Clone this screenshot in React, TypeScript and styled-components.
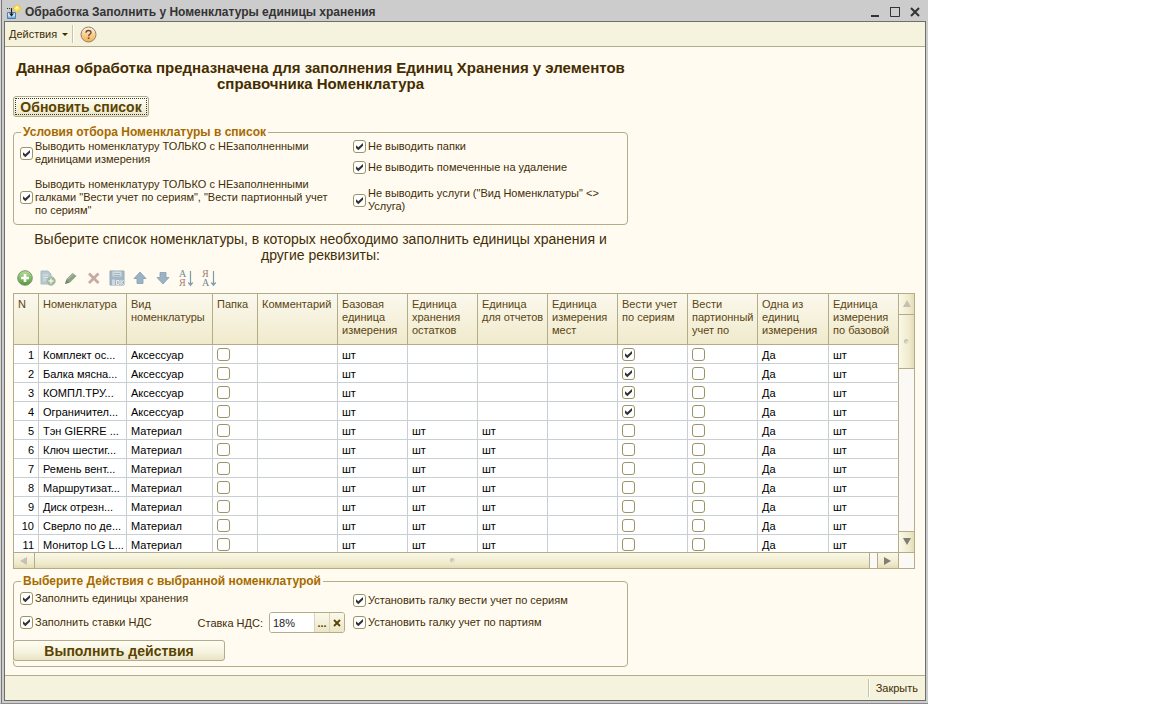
import React, { useState } from "react";
import styled, { createGlobalStyle, css } from "styled-components";

const color = {
  chrome: "#cccccc",
  frame: "#6e6e6e",
  bar: "#f5f2dd",
  page: "#fffbf0",
  line: "#b3ac86",
  grid: "#c8cfd3",
  text: "#3f2e08",
  strong: "#442d00",
  legend: "#a66a00",
  button: "#594300",
  head: "#5a4510",
};

const GlobalStyle = createGlobalStyle`
  *, *::before, *::after { box-sizing: border-box; }
  body { margin: 0; background: #ffffff; }
  body, button, input { font-family: "Liberation Sans", Arial, sans-serif; font-size: 11px; }
`;

const Window = styled.div`
  display: flex;
  flex-direction: column;
  width: 100%;
  max-width: 928px;
  min-height: 100vh;
  padding: 0 2px 2px 3px;
  background: ${color.chrome};
  border-left: 1px solid #d8d8d8;
  border-bottom: 1px solid #8a8a8a;
  box-shadow: inset 1px 0 0 #777777;
  color: ${color.text};
`;

const TitleBar = styled.header`
  display: flex;
  align-items: center;
  height: 21px;
  padding: 2px 1px 0 2px;
`;

const Title = styled.h1`
  flex: 1;
  margin: 0 0 0 3px;
  font-size: 12px;
  line-height: 14px;
  color: #333333;
`;

const PlainButton = styled.button`
  display: inline-flex;
  align-items: center;
  justify-content: center;
  padding: 0;
  border: 0;
  background: none;
  color: inherit;
`;

const WindowButton = styled(PlainButton)`
  width: 20px;
  height: 16px;
`;

const Client = styled.div`
  display: flex;
  flex: 1;
  flex-direction: column;
  border: 1px solid ${color.frame};
  background: ${color.page};
`;

const MenuBar = styled.nav`
  display: flex;
  align-items: center;
  height: 25px;
  padding-left: 4px;
  background: ${color.bar};
  border-bottom: 1px solid ${color.line};
`;

const MenuButton = styled(PlainButton)`
  gap: 5px;
  line-height: 14px;
`;

const Separator = styled.span`
  width: 2px;
  height: 18px;
  margin: 0 6px 0 4px;
  border-left: 1px solid #c9c4a4;
  border-right: 1px solid #ffffff;
`;

const Main = styled.main`
  flex: 1;
  padding: 13px 10px 8px 8px;
`;

const Form = styled.section`
  max-width: 615px;
`;

const Heading = styled.h2`
  margin: 0 0 4px;
  font-size: 15px;
  line-height: 16px;
  text-align: center;
  color: ${color.strong};
`;

const Hint = styled.p`
  margin: 6px 0 4px;
  font-size: 14px;
  line-height: 16px;
  text-align: center;
`;

const PushButton = styled.button<{ $wide?: boolean; $focused?: boolean }>`
  display: block;
  height: 21px;
  width: ${(p) => (p.$wide ? "212px" : "136px")};
  padding: 0;
  font-size: 14px;
  line-height: 16px;
  font-weight: bold;
  white-space: nowrap;
  color: ${color.button};
  border: 1px solid ${color.line};
  border-radius: 3px;
  background: linear-gradient(#fffef6, #f5f2dc 60%, #e9e4c4);
  ${(p) =>
    p.$wide &&
    css`
      box-shadow: 0 -1px 0 ${color.page}, 0 1px 0 ${color.page};
    `}
  ${(p) =>
    p.$focused &&
    css`
      outline: 1px dotted #333333;
      outline-offset: -3px;
    `}
`;

const Group = styled.fieldset`
  min-width: 0;
  margin: 0;
  padding: 0 6px 5px;
  border: 1px solid ${color.line};
  border-radius: 4px;
`;

const FilterGroup = styled(Group)`
  margin-top: 8px;
  padding-bottom: 7px;
`;

const Legend = styled.legend`
  padding: 0 2px;
  margin-left: 1px;
  font-size: 12px;
  line-height: 14px;
  font-weight: bold;
  color: ${color.legend};
`;

const Columns = styled.div`
  display: grid;
  grid-template-columns: 333px 1fr;
`;

const Stack = styled.div<{ $gap: number; $top: number; $rows?: string }>`
  display: grid;
  align-content: start;
  align-items: end;
  gap: ${(p) => p.$gap}px;
  grid-template-rows: ${(p) => p.$rows ?? "none"};
  padding-top: ${(p) => p.$top}px;
`;

const CheckLabel = styled.label`
  display: flex;
  align-items: center;
  gap: 2px;
  line-height: 13px;
`;

const tick =
  "url(\"data:image/svg+xml,%3Csvg xmlns='http://www.w3.org/2000/svg' viewBox='0 0 11 11'%3E%3Cpath d='M2 4.2L4.3 6.3L9 2V4.8L4.3 9.2L2 7Z' fill='%23333333'/%3E%3C/svg%3E\")";

const Check = styled.input.attrs({ type: "checkbox" })`
  appearance: none;
  flex: none;
  display: block;
  width: 13px;
  height: 13px;
  margin: 0;
  border: 1px solid #9b9468;
  border-radius: 3px;
  background: #ffffff;
  &:checked {
    background: #ffffff ${tick} center / 11px 11px no-repeat;
  }
`;

const Between = styled.div`
  display: flex;
  align-items: center;
  justify-content: space-between;
  padding-right: 8px;
`;

const Field = styled.div`
  display: flex;
  align-items: center;
  gap: 6px;
`;

const Combo = styled.div`
  display: flex;
  width: 76px;
  height: 21px;
  border: 1px solid ${color.line};
  border-radius: 3px;
  overflow: hidden;
`;

const ComboInput = styled.input`
  flex: 1;
  min-width: 0;
  padding: 0 3px;
  border: 0;
  background: #ffffff;
  color: #222222;
`;

const ComboButton = styled(PlainButton)`
  width: 15px;
  font-weight: bold;
  color: ${color.button};
  border-left: 1px solid #d9d4b6;
  background: linear-gradient(#fbf9ec, #ebe6c8);
`;

const ActionSlot = styled.div`
  margin: 7px 0 0 -7px;
`;

const ListTools = styled.div`
  display: flex;
  height: 22px;
  margin-bottom: 4px;
`;

const ToolButton = styled(PlainButton)`
  width: 23px;
  height: 22px;
`;

const ListBox = styled.div`
  display: grid;
  grid-template-columns: 1fr 15px;
  grid-template-rows: 258px 16px;
  margin-bottom: 5px;
  border: 1px solid ${color.line};
`;

const Viewport = styled.div`
  overflow: hidden;
  background: #ffffff;
`;

const Table = styled.table`
  width: 100%;
  table-layout: fixed;
  border-collapse: separate;
  border-spacing: 0;
`;

const HeadRow = styled.tr`
  height: 51px;
  background: linear-gradient(#fbf9ee, #f0e9cb);
`;

const HeadCell = styled.th`
  padding: 4px 0 0 4px;
  font-weight: normal;
  line-height: 13px;
  text-align: left;
  vertical-align: top;
  white-space: nowrap;
  color: ${color.head};
  border-right: 1px solid ${color.line};
  border-bottom: 1px solid ${color.line};
`;

const Cell = styled.td<{ $right?: boolean }>`
  height: 19px;
  padding: ${(p) => (p.$right ? "1px 4px 0 0" : "1px 0 0 4px")};
  line-height: 14px;
  text-align: ${(p) => (p.$right ? "right" : "left")};
  white-space: nowrap;
  overflow: hidden;
  color: #000000;
  border-right: 1px solid ${color.grid};
  border-bottom: 1px solid ${color.grid};
  &:last-child {
    border-right-color: ${color.line};
  }
`;

const ScrollTrack = styled.div<{ $vertical?: boolean }>`
  display: flex;
  flex-direction: ${(p) => (p.$vertical ? "column" : "row")};
  justify-content: space-between;
  background: #faf9f5;
  ${(p) => !p.$vertical && css`border-top: 1px solid ${color.line};`}
`;

const face = (vertical?: boolean) =>
  `linear-gradient(${vertical ? "to right" : "to bottom"}, #faf8ea, #efeaca 70%, #e3dcb8)`;

const ScrollArrow = styled(PlainButton)<{ $vertical?: boolean; $end?: boolean }>`
  flex: none;
  width: ${(p) => (p.$vertical ? "15px" : p.$end ? "22px" : "21px")};
  height: ${(p) => (p.$vertical ? "21px" : "15px")};
  background: ${(p) => face(p.$vertical)};
  border: 0 solid ${color.line};
  ${(p) =>
    p.$vertical
      ? p.$end ? "border-top-width: 1px;" : "border-bottom-width: 1px;"
      : p.$end ? "border-width: 0 1px;" : "border-right-width: 1px;"}
`;

const ScrollThumb = styled.div<{ $vertical?: boolean }>`
  display: flex;
  align-items: center;
  justify-content: center;
  background: ${(p) => face(p.$vertical)};
  ${(p) =>
    p.$vertical
      ? css`height: 54px; margin-bottom: auto; border-bottom: 1px solid ${color.line};`
      : css`flex: 1; margin-right: 7px; border-right: 1px solid ${color.line};`}
  &::after {
    content: "";
    width: 5px;
    height: 5px;
    border-radius: 50%;
    background: linear-gradient(135deg, #b5b09a, #f6f3e2);
  }
`;

const Corner = styled.div`
  background: #faf9f5;
  border-top: 1px solid ${color.line};
`;

const Footer = styled.footer`
  display: flex;
  align-items: center;
  justify-content: flex-end;
  height: 25px;
  padding-right: 7px;
  background: ${color.bar};
  border-top: 1px solid ${color.line};
`;

const SortLetter = styled.text`
  font-family: "Liberation Serif", serif;
  font-size: 10px;
`;

const ToolIcon = styled.svg`
  display: block;
  overflow: visible;
`;

function AppIcon() {
  return (
    <svg width="16" height="16" viewBox="0 0 16 16" aria-hidden="true">
      <path d="M1.5 8.5H9.5V14.5H1.5Z" fill="#cfe4f5" stroke="#4b7fae" />
      <path d="M2 12.5H9V14H2Z" fill="#7fb0dc" />
      <path d="M5.5 4V12" stroke="#222" strokeWidth="1.2" />
      <path d="M3 9.5H8L5.5 12.5Z" fill="#222" />
      <path d="M1 4.5H8" stroke="#333" strokeDasharray="1 1" />
      <path d="M11 0.5L15 4.5L11 8.5L7 4.5Z" fill="#ffe34d" stroke="#e8bf20" strokeWidth="0.8" />
      <path d="M11 1.8L13 4L10 5L8.5 4.5Z" fill="#fff6a8" />
    </svg>
  );
}

function HelpIcon() {
  return (
    <svg width="17" height="17" viewBox="0 0 17 17" aria-hidden="true">
      <defs>
        <linearGradient id="help" x1="0" y1="0" x2="0" y2="1">
          <stop offset="0" stopColor="#fff1dc" />
          <stop offset="1" stopColor="#f5b04c" />
        </linearGradient>
      </defs>
      <circle cx="8.5" cy="8.5" r="7.5" fill="url(#help)" stroke="#8f8070" />
      <path d="M6 6.8C6 3.7 11 3.7 11 6.5C11 8.2 8.6 8.2 8.6 10.2" fill="none" stroke="#6d4d35" strokeWidth="1.4" />
      <rect x="7.8" y="11.4" width="1.6" height="1.6" fill="#6d4d35" />
    </svg>
  );
}

const sortArrow = (
  <path d="M12.5 1V15M10.3 12.5L12.5 15.2L14.7 12.5" fill="none" stroke="#7c9bb0" strokeWidth="1.2" />
);

const listTools: { name: string; icon: React.ReactNode }[] = [
  {
    name: "Добавить",
    icon: (
      <>
        <defs>
          <linearGradient id="add" x1="0" y1="0" x2="0" y2="1">
            <stop offset="0" stopColor="#b9e09a" />
            <stop offset="1" stopColor="#4f9a35" />
          </linearGradient>
        </defs>
        <circle cx="8" cy="8" r="7.3" fill="url(#add)" stroke="#7d9373" />
        <path d="M8 4V12M4 8H12" stroke="#fff" strokeWidth="2.6" />
      </>
    ),
  },
  {
    name: "Скопировать",
    icon: (
      <>
        <path d="M1 1H8L11 4V14H1Z" fill="#b9c9d0" stroke="#a8bac3" />
        <path d="M3 5H8M3 7.5H9M3 10H7" stroke="#dfe7ea" />
        <circle cx="11" cy="11" r="4.3" fill="#9fb99c" stroke="#b5c5b0" />
        <path d="M11 8.5V13.5M8.5 11H13.5" stroke="#eef3ea" strokeWidth="1.6" />
      </>
    ),
  },
  {
    name: "Изменить",
    icon: (
      <>
        <path d="M2.5 13.5L3.5 9L9.5 3L13.5 6L7 12.5Z" fill="#8ba286" />
        <path d="M2 14L3.2 9.8L6.5 12.8Z" fill="#6f8570" />
        <path d="M5 9L10.5 4" stroke="#b2c3ab" />
      </>
    ),
  },
  {
    name: "Удалить",
    icon: <path d="M3 3.5L12.5 13M12.5 3.5L3 13" stroke="#c7aaa3" strokeWidth="2.8" />,
  },
  {
    name: "Закончить редактирование",
    icon: (
      <>
        <path d="M1 1H15V15H1Z" fill="#a4b8c4" stroke="#94aab8" />
        <path d="M3.5 1.5H12.5V6.5H3.5Z" fill="#d3dee3" />
        <path d="M4.5 3.5H11.5M4.5 5.5H11.5" stroke="#a4b8c4" />
        <path d="M3 9.5H6V15H3Z" fill="#cfdae0" />
        <path d="M7.5 10.5H10V14.5H7.5ZM12 10V15M14.8 10L12.5 12.5L14.8 15" fill="none" stroke="#e8eef0" />
      </>
    ),
  },
  {
    name: "Переместить вверх",
    icon: <path d="M8 2L14 8.5H11V13.5H5V8.5H2Z" fill="#9bb3c4" stroke="#859eb0" strokeWidth="0.8" />,
  },
  {
    name: "Переместить вниз",
    icon: <path d="M8 14L14 7.5H11V2.5H5V7.5H2Z" fill="#9bb3c4" stroke="#859eb0" strokeWidth="0.8" />,
  },
  {
    name: "Сортировать по возрастанию",
    icon: (
      <>
        <SortLetter x="1" y="7" fill="#6f8998">А</SortLetter>
        <SortLetter x="1" y="16" fill="#a07f78">Я</SortLetter>
        {sortArrow}
      </>
    ),
  },
  {
    name: "Сортировать по убыванию",
    icon: (
      <>
        <SortLetter x="1" y="7" fill="#a07f78">Я</SortLetter>
        <SortLetter x="1" y="16" fill="#6f8998">А</SortLetter>
        {sortArrow}
      </>
    ),
  },
];

const columns: { width: number; lines: string[] }[] = [
  { width: 25, lines: ["N"] },
  { width: 88, lines: ["Номенклатура"] },
  { width: 86, lines: ["Вид", "номенклатуры"] },
  { width: 45, lines: ["Папка"] },
  { width: 80, lines: ["Комментарий"] },
  { width: 70, lines: ["Базовая", "единица", "измерения"] },
  { width: 70, lines: ["Единица", "хранения", "остатков"] },
  { width: 70, lines: ["Единица", "для отчетов"] },
  { width: 70, lines: ["Единица", "измерения", "мест"] },
  { width: 70, lines: ["Вести учет", "по сериям"] },
  { width: 70, lines: ["Вести", "партионный", "учет по"] },
  { width: 71, lines: ["Одна из", "единиц", "измерения"] },
  { width: 70, lines: ["Единица", "измерения", "по базовой"] },
];

const items = [
  { name: "Комплект ос...", kind: "Аксессуар" },
  { name: "Балка мясна...", kind: "Аксессуар" },
  { name: "КОМПЛ.ТРУ...", kind: "Аксессуар" },
  { name: "Ограничител...", kind: "Аксессуар" },
  { name: "Тэн GIERRE ...", kind: "Материал" },
  { name: "Ключ шестиг...", kind: "Материал" },
  { name: "Ремень вент...", kind: "Материал" },
  { name: "Маршрутизат...", kind: "Материал" },
  { name: "Диск отрезн...", kind: "Материал" },
  { name: "Сверло по де...", kind: "Материал" },
  { name: "Монитор LG L...", kind: "Материал" },
];

function Option({ children }: { children: React.ReactNode }) {
  return (
    <CheckLabel>
      <Check defaultChecked />
      <span>{children}</span>
    </CheckLabel>
  );
}

const arrows = {
  up: "M4 0L8 7H0Z",
  down: "M0 0H8L4 7Z",
  left: "M7 0V8L0 4Z",
  right: "M0 0L7 4L0 8Z",
};

function Arrow({ to, dim }: { to: keyof typeof arrows; dim?: boolean }) {
  return (
    <svg width="8" height="8" viewBox="0 0 8 8" aria-hidden="true">
      <path d={arrows[to]} fill={dim ? "#c4c1b4" : "#7f7d74"} />
    </svg>
  );
}

function ItemList() {
  return (
    <ListBox>
      <Viewport>
        <Table>
          <colgroup>
            {columns.map((c, i) => (
              <col key={i} width={c.width} />
            ))}
          </colgroup>
          <thead>
            <HeadRow>
              {columns.map((c, i) => (
                <HeadCell key={i} scope="col">
                  {c.lines.map((line, n) => (
                    <React.Fragment key={n}>
                      {n > 0 && <br />}
                      {line}
                    </React.Fragment>
                  ))}
                </HeadCell>
              ))}
            </HeadRow>
          </thead>
          <tbody>
            {items.map((item, i) => {
              const accessory = item.kind === "Аксессуар";
              const unit = accessory ? "" : "шт";
              return (
                <tr key={item.name}>
                  <Cell $right>{i + 1}</Cell>
                  <Cell>{item.name}</Cell>
                  <Cell>{item.kind}</Cell>
                  <Cell><Check aria-label="Папка" /></Cell>
                  <Cell />
                  <Cell>шт</Cell>
                  <Cell>{unit}</Cell>
                  <Cell>{unit}</Cell>
                  <Cell />
                  <Cell><Check aria-label="Вести учет по сериям" defaultChecked={accessory} /></Cell>
                  <Cell><Check aria-label="Вести партионный учет" /></Cell>
                  <Cell>Да</Cell>
                  <Cell>шт</Cell>
                </tr>
              );
            })}
          </tbody>
        </Table>
      </Viewport>
      <ScrollTrack $vertical>
        <ScrollArrow $vertical aria-label="Вверх"><Arrow to="up" dim /></ScrollArrow>
        <ScrollThumb $vertical />
        <ScrollArrow $vertical $end aria-label="Вниз"><Arrow to="down" /></ScrollArrow>
      </ScrollTrack>
      <ScrollTrack>
        <ScrollArrow aria-label="Влево"><Arrow to="left" dim /></ScrollArrow>
        <ScrollThumb />
        <ScrollArrow $end aria-label="Вправо"><Arrow to="right" /></ScrollArrow>
      </ScrollTrack>
      <Corner />
    </ListBox>
  );
}

export default function App() {
  const [rate, setRate] = useState("18%");
  return (
    <>
      <GlobalStyle />
      <Window>
        <TitleBar>
          <AppIcon />
          <Title>Обработка Заполнить у Номенклатуры единицы хранения</Title>
          <WindowButton aria-label="Свернуть">
            <svg width="12" height="12" viewBox="0 0 12 12"><path d="M2 10H10" stroke="#333" strokeWidth="2" /></svg>
          </WindowButton>
          <WindowButton aria-label="Развернуть">
            <svg width="12" height="12" viewBox="0 0 12 12"><path d="M1.5 1.5H10.5V10.5H1.5ZM1 1.5H11" fill="none" stroke="#333" /></svg>
          </WindowButton>
          <WindowButton aria-label="Закрыть окно">
            <svg width="12" height="12" viewBox="0 0 12 12"><path d="M2 2L10 10M10 2L2 10" stroke="#333" strokeWidth="2" /></svg>
          </WindowButton>
        </TitleBar>
        <Client>
          <MenuBar>
            <MenuButton>
              Действия
              <svg width="6" height="3" viewBox="0 0 6 3"><path d="M0 0H6L3 3Z" fill={color.text} /></svg>
            </MenuButton>
            <Separator />
            <PlainButton aria-label="Справка"><HelpIcon /></PlainButton>
          </MenuBar>
          <Main>
            <Form>
              <Heading>
                Данная обработка предназначена для заполнения Единиц Хранения у элементов
                <br />
                справочника Номенклатура
              </Heading>
              <PushButton $focused>Обновить список</PushButton>
              <FilterGroup>
                <Legend>Условия отбора Номенклатуры в список</Legend>
                <Columns>
                  <Stack $gap={12} $top={1}>
                    <Option>
                      Выводить номенклатуру ТОЛЬКО с НЕзаполненными
                      <br />
                      единицами измерения
                    </Option>
                    <Option>
                      Выводить номенклатуру ТОЛЬКО с НЕзаполненными
                      <br />
                      галками "Вести учет по сериям", "Вести партионный учет
                      <br />
                      по сериям"
                    </Option>
                  </Stack>
                  <Stack $gap={8} $top={1} $rows="13px 13px 31px">
                    <Option>Не выводить папки</Option>
                    <Option>Не выводить помеченные на удаление</Option>
                    <Option>
                      Не выводить услуги ("Вид Номенклатуры" &lt;&gt;
                      <br />
                      Услуга)
                    </Option>
                  </Stack>
                </Columns>
              </FilterGroup>
              <Hint>
                Выберите список номенклатуры, в которых необходимо заполнить единицы хранения и
                <br />
                другие реквизиты:
              </Hint>
            </Form>
            <ListTools role="toolbar">
              {listTools.map((tool) => (
                <ToolButton key={tool.name} aria-label={tool.name}>
                  <ToolIcon width="16" height="16" viewBox="0 0 16 16">{tool.icon}</ToolIcon>
                </ToolButton>
              ))}
            </ListTools>
            <ItemList />
            <Form>
              <Group>
                <Legend>Выберите Действия с выбранной номенклатурой</Legend>
                <Columns>
                  <Stack $gap={7} $top={4}>
                    <Option>Заполнить единицы хранения</Option>
                    <Between>
                      <Option>Заполнить ставки НДС</Option>
                      <Field>
                        <label htmlFor="rate">Ставка НДС:</label>
                        <Combo>
                          <ComboInput id="rate" value={rate} onChange={(e) => setRate(e.target.value)} />
                          <ComboButton aria-label="Выбрать">...</ComboButton>
                          <ComboButton aria-label="Очистить" onClick={() => setRate("")}>
                            <svg width="8" height="8" viewBox="0 0 8 8"><path d="M1 1L7 7M7 1L1 7" stroke={color.button} strokeWidth="1.8" /></svg>
                          </ComboButton>
                        </Combo>
                      </Field>
                    </Between>
                  </Stack>
                  <Stack $gap={9} $top={6}>
                    <Option>Установить галку вести учет по сериям</Option>
                    <Option>Установить галку учет по партиям</Option>
                  </Stack>
                </Columns>
                <ActionSlot>
                  <PushButton $wide>Выполнить действия</PushButton>
                </ActionSlot>
              </Group>
            </Form>
          </Main>
          <Footer>
            <Separator />
            <PlainButton>Закрыть</PlainButton>
          </Footer>
        </Client>
      </Window>
    </>
  );
}
